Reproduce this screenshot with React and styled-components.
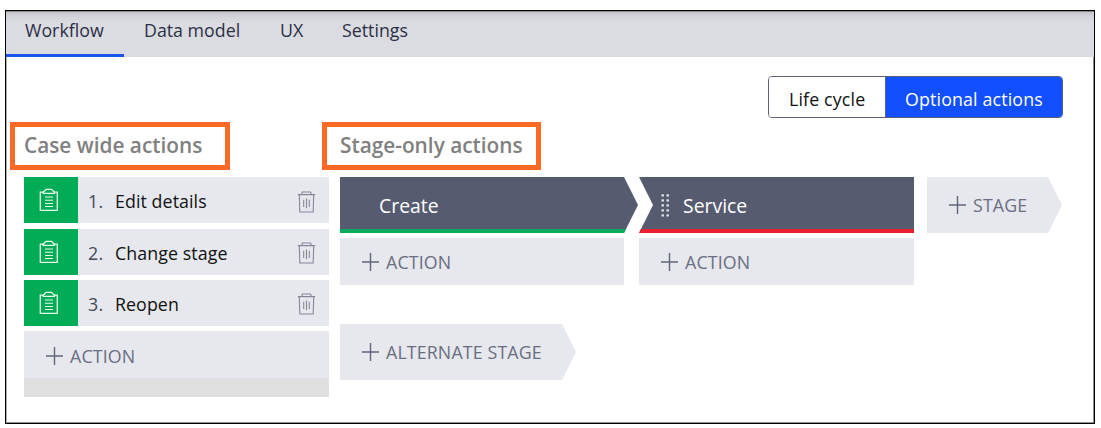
import React from "react";
import styled, { createGlobalStyle } from "styled-components";

const GlobalStyle = createGlobalStyle`
  * { box-sizing: border-box; }
  body {
    margin: 0;
    background: #fff;
    font-family: "Open Sans", "Noto Sans", sans-serif;
    font-size: 17.8px;
    color: #1c1f2e;
  }
`;

const Frame = styled.main`
  width: 1090px;
  height: 414px;
  margin: 10px 0 0 5px;
  border: 1px solid #000;
  box-shadow: inset 1px 0 0 #b0b0b0, inset -1px -1px 0 #8c8c8c;
`;

const TabBar = styled.nav`
  display: flex;
  height: 46px;
  background: linear-gradient(#8b8c90 0 1px, #c4c5ca 1px, #d2d3d8 5px, #dbdce1 12px);
`;

const Tab = styled.a`
  height: 46px;
  width: ${(p) => p.$width}px;
  padding-left: ${(p) => p.$inset}px;
  line-height: 38px;
  white-space: nowrap;
  color: #2b2f45;
  border-bottom: 3px solid ${(p) => (p.$active ? "#1a53ee" : "transparent")};
`;

const Toolbar = styled.div`
  display: flex;
  justify-content: flex-end;
  padding: 19px 31px 0 0;
`;

const Toggle = styled.div`
  display: flex;
  width: 295px;
  height: 42px;
  border: 1px solid #5c6178;
  border-radius: 4px;
  overflow: hidden;
`;

const ToggleButton = styled.button`
  width: ${(p) => p.$width}px;
  padding: 0 0 0 ${(p) => p.$inset}px;
  border: 0;
  border-right: ${(p) => (p.$active ? "0" : "1px solid #5c6178")};
  background: ${(p) => (p.$active ? "#124fff" : "#fff")};
  color: ${(p) => (p.$active ? "#fff" : "#111")};
  font: inherit;
  line-height: 44px;
  text-align: left;
  white-space: nowrap;
  letter-spacing: 0.15px;
`;

const Titles = styled.div`
  display: flex;
  gap: 92px;
  padding: 4px 0 0 4px;
`;

const Title = styled.h2`
  width: ${(p) => p.$width}px;
  height: 48px;
  margin: 0;
  padding-left: ${(p) => p.$inset}px;
  border: 5px solid #fb6a24;
  font-size: 20.8px;
  font-weight: 600;
  line-height: 36px;
  white-space: nowrap;
  color: #808080;
`;

const Board = styled.div`
  display: flex;
  align-items: flex-start;
  padding: 7px 0 0 18px;
`;

const CaseActions = styled.section`
  display: flex;
  flex-direction: column;
  gap: 5.4px;
  width: 305px;
  margin-right: 11px;
  padding-top: 0.2px;
`;

const ActionRow = styled.div`
  display: flex;
  align-items: center;
  height: 46px;
  padding-right: 13.5px;
  background: #e7e8ed;
  color: #111;
`;

const Badge = styled.span`
  display: flex;
  align-items: center;
  justify-content: center;
  width: 54px;
  height: 46px;
  padding-right: 4px;
  background: #02ab56;
`;

const Index = styled.span`
  width: 36px;
  padding-left: 10px;
  letter-spacing: 0.3px;
  color: #444859;
  margin-top: 2px;
`;

const ActionName = styled.span`
  flex: 1;
  margin: 2px 0 0 1px;
  white-space: nowrap;
  letter-spacing: 0.08px;
`;

const AddFooter = styled.div`
  padding-bottom: 19px;
  background: #e0e0e0;
`;

const AddButton = styled.button`
  display: flex;
  align-items: center;
  gap: 7px;
  width: ${(p) => p.$width}px;
  height: ${(p) => p.$height || 47}px;
  padding: ${(p) => p.$drop || 0}px 0 0 22px;
  border: 0;
  background: #e7e8ed;
  color: #6a6e84;
  font: inherit;
  white-space: nowrap;
  letter-spacing: 0.14px;
  clip-path: ${(p) =>
    p.$arrow
      ? "polygon(0 0, calc(100% - 14px) 0, 100% 50%, calc(100% - 14px) 100%, 0 100%)"
      : "none"};
`;

const StageArea = styled.section`
  display: flex;
  flex-direction: column;
  gap: 39px;
`;

const Stages = styled.div`
  display: flex;
  align-items: flex-start;
`;

const Stage = styled.div`
  display: flex;
  flex-direction: column;
  gap: 5px;
  width: ${(p) => p.$width}px;
`;

const StageHeader = styled.header`
  display: flex;
  align-items: center;
  gap: 13px;
  width: ${(p) => p.$width}px;
  height: 56px;
  padding: 5px 0 0 ${(p) => p.$inset}px;
  background: #575b70;
  border-bottom: 4px solid ${(p) => p.$accent};
  color: #fff;
  font-size: 19.4px;
  clip-path: ${(p) => p.$shape};
`;

const POINTED = "polygon(0 0, calc(100% - 14px) 0, 100% 50%, calc(100% - 14px) 100%, 0 100%)";
const NOTCHED = "polygon(0 0, 100% 0, 100% 100%, 0 100%, 14px 50%)";

const ClipboardIcon = () => (
  <svg width="20" height="24" viewBox="0 0 20 24" fill="none" stroke="#e4fbe9" strokeWidth="1.3">
    <path d="M4.5 4.2H1.3V22.3H18.3V4.2H15.1" />
    <path d="M4.2 5.4V4.2L7 1.4H12.6L15.4 4.2V5.4Z" />
    <path d="M6 9H14M6 12.3H14M6 15.5H14M6 18.5H14" strokeWidth="1.1" />
  </svg>
);

const TrashIcon = () => (
  <svg width="19" height="22" viewBox="0 0 19 22" fill="none" stroke="#83879a" strokeWidth="1.1">
    <path d="M0.8 3.6H18.2M4.6 3.4L5.4 1H13.6L14.4 3.4M2.3 3.8L2.8 21H16.2L16.7 3.8" />
    <path d="M6.7 8.8V16M9.5 7.6V17.2M12.3 8.8V16" />
  </svg>
);

const TrashButton = styled.button`
  display: flex;
  padding: 3px 0 0;
  border: 0;
  background: none;
`;

const PlusIcon = () => (
  <svg width="17" height="18" viewBox="0 0 17 18" fill="none" stroke="#5f647b" strokeWidth="1.4">
    <path d="M0 9H17M8.5 0V18" />
  </svg>
);

const GripIcon = () => (
  <svg width="9" height="23" viewBox="0 0 9 23" fill="#e6e7ec">
    {[0, 5, 10, 15, 20].map((y) => (
      <g key={y}>
        <rect x="0.5" y={y + 0.3} width="2.4" height="2.2" />
        <rect x="5.5" y={y + 0.3} width="2.4" height="2.2" />
      </g>
    ))}
  </svg>
);

const caseActions = ["Edit details", "Change stage", "Reopen"];

export default function App() {
  return (
    <>
      <GlobalStyle />
      <Frame>
        <TabBar>
          <Tab $active $width={118} $inset={19}>Workflow</Tab>
          <Tab $width={137} $inset={20}>Data model</Tab>
          <Tab $width={62} $inset={19}>UX</Tab>
          <Tab $width={100} $inset={19}>Settings</Tab>
        </TabBar>
        <Toolbar>
          <Toggle>
            <ToggleButton $width={117} $inset={20}>Life cycle</ToggleButton>
            <ToggleButton $active $width={176} $inset={19}>Optional actions</ToggleButton>
          </Toggle>
        </Toolbar>
        <Titles>
          <Title $width={220} $inset={9}>Case wide actions</Title>
          <Title $width={219} $inset={13}>Stage-only actions</Title>
        </Titles>
        <Board>
          <CaseActions>
            {caseActions.map((name, i) => (
              <ActionRow key={name}>
                <Badge><ClipboardIcon /></Badge>
                <Index>{i + 1}.</Index>
                <ActionName>{name}</ActionName>
                <TrashButton aria-label={`Delete ${name}`}><TrashIcon /></TrashButton>
              </ActionRow>
            ))}
            <AddFooter>
              <AddButton $width={305} $drop={3}><PlusIcon />ACTION</AddButton>
            </AddFooter>
          </CaseActions>
          <StageArea>
            <Stages>
              <Stage $width={299}>
                <StageHeader $width={298} $inset={39} $accent="#06ac5c" $shape={POINTED}>Create</StageHeader>
                <AddButton $width={284}><PlusIcon />ACTION</AddButton>
              </Stage>
              <Stage $width={288}>
                <StageHeader $width={275} $inset={22} $accent="#e82030" $shape={NOTCHED}>
                  <GripIcon />Service
                </StageHeader>
                <AddButton $width={275}><PlusIcon />ACTION</AddButton>
              </Stage>
              <AddButton $arrow $width={135} $height={56}><PlusIcon />STAGE</AddButton>
            </Stages>
            <AddButton $arrow $width={236} $height={56}><PlusIcon />ALTERNATE STAGE</AddButton>
          </StageArea>
        </Board>
      </Frame>
    </>
  );
}
